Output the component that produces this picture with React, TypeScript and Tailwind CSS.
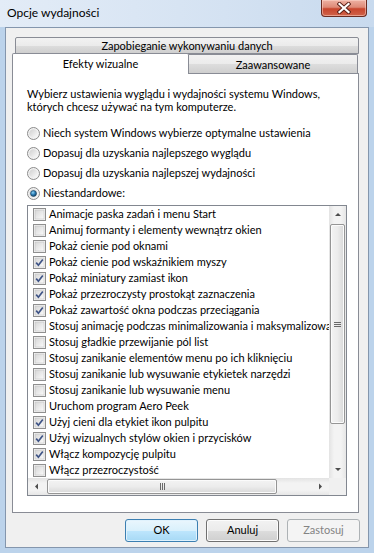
import React from "react";

const rows: [string, boolean][] = [
  ["Animacje paska zadań i menu Start", false],
  ["Animuj formanty i elementy wewnątrz okien", false],
  ["Pokaż cienie pod oknami", false],
  ["Pokaż cienie pod wskaźnikiem myszy", true],
  ["Pokaż miniatury zamiast ikon", true],
  ["Pokaż przezroczysty prostokąt zaznaczenia", true],
  ["Pokaż zawartość okna podczas przeciągania", true],
  ["Stosuj animację podczas minimalizowania i maksymalizowania okien", false],
  ["Stosuj gładkie przewijanie pól list", false],
  ["Stosuj zanikanie elementów menu po ich kliknięciu", false],
  ["Stosuj zanikanie lub wysuwanie etykietek narzędzi", false],
  ["Stosuj zanikanie lub wysuwanie menu", false],
  ["Uruchom program Aero Peek", false],
  ["Użyj cieni dla etykiet ikon pulpitu", true],
  ["Użyj wizualnych stylów okien i przycisków", true],
  ["Włącz kompozycję pulpitu", true],
  ["Włącz przezroczystość", false],
];

function Checkbox({ checked }: { checked: boolean }) {
  return (
    <svg width="13" height="13" viewBox="0 0 13 13" className="shrink-0">
      <defs>
        <linearGradient id="cbg" x1="0" y1="0" x2="1" y2="1">
          <stop offset="0" stopColor="#d6d6d6" />
          <stop offset="1" stopColor="#fbfbfb" />
        </linearGradient>
      </defs>
      <rect x="0.5" y="0.5" width="12" height="12" fill="#f4f4f4" stroke="#8f8f8f" />
      <rect x="2" y="2" width="9" height="9" fill="url(#cbg)" stroke="#bdbdbd" strokeWidth="0.5" />
      {checked && (
        <path d="M3.2 6.6 L5.4 9.2 L9.8 3.4" fill="none" stroke="#3f5486" strokeWidth="1.7" strokeLinejoin="miter" />
      )}
    </svg>
  );
}

function Radio({ checked }: { checked: boolean }) {
  return (
    <svg width="13" height="13" viewBox="0 0 13 13" className="shrink-0">
      <defs>
        <linearGradient id="rbg" x1="0" y1="0" x2="1" y2="1">
          <stop offset="0" stopColor="#cfcfcf" />
          <stop offset="1" stopColor="#fcfcfc" />
        </linearGradient>
        <radialGradient id="rdot" cx="0.4" cy="0.35" r="0.7">
          <stop offset="0" stopColor="#8fd3f5" />
          <stop offset="0.5" stopColor="#2b7db5" />
          <stop offset="1" stopColor="#0c3a5e" />
        </radialGradient>
      </defs>
      <circle cx="6.5" cy="6.5" r="6" fill="#f2f2f2" stroke="#8b8b8b" />
      <circle cx="6.5" cy="6.5" r="4.3" fill="url(#rbg)" />
      {checked && <circle cx="6.5" cy="6.5" r="3" fill="url(#rdot)" stroke="#1b3f5c" strokeWidth="0.6" />}
    </svg>
  );
}

function Arrow({ dir }: { dir: "up" | "down" | "left" | "right" }) {
  const p =
    dir === "up"
      ? "M1 4 L4 1 L7 4 Z"
      : dir === "down"
      ? "M1 1 L4 4 L7 1 Z"
      : dir === "left"
      ? "M4 0.5 L1 3.5 L4 6.5 Z"
      : "M1 0.5 L4 3.5 L1 6.5 Z";
  const w = dir === "up" || dir === "down" ? 8 : 5;
  const h = dir === "up" || dir === "down" ? 5 : 7;
  return (
    <svg width={w} height={h} viewBox={`0 0 ${w} ${h}`}>
      <path d={p} fill="#4d4d4d" />
    </svg>
  );
}

function Btn({ label, def, disabled }: { label: string; def?: boolean; disabled?: boolean }) {
  if (disabled) {
    return (
      <div className="w-[73px] h-[23px] rounded-[3px] border border-[#adb2b5] bg-[#f4f4f4] flex items-center justify-center text-[#838383]">
        {label}
      </div>
    );
  }
  return (
    <div
      className={
        "w-[73px] h-[23px] rounded-[3px] border flex items-center justify-center text-black " +
        (def
          ? "border-[#3c7fb1] bg-[linear-gradient(#eaf6fd_0%,#d9f0fc_50%,#bee6fd_51%,#a7d9f5_100%)] shadow-[inset_0_0_0_1px_#e0f2fd]"
          : "border-[#707070] bg-[linear-gradient(#f2f2f2_0%,#ebebeb_50%,#dddddd_51%,#cfcfcf_100%)] shadow-[inset_0_0_0_1px_#fcfcfc]")
      }
    >
      {label}
    </div>
  );
}

export default function App() {
  return (
    <div
      className="w-[374px] h-[553px] bg-[#bcd3eb] flex flex-col overflow-hidden text-[11px] text-black"
      style={{ fontFamily: 'Lato, "Noto Sans", sans-serif' }}
    >
      {/* title bar */}
      <div className="h-[27px] flex justify-between bg-[linear-gradient(90deg,#e3ecf7_0%,#d4e2f2_60%,#c8daee_100%)]">
        <div className="pl-[7px] pt-[5px] leading-[16px] text-[12px]">Opcje wydajności</div>
        <div className="mr-[7px] w-[46px] h-[17px] rounded-b-[4px] border border-t-0 border-[#6a2c22] bg-[linear-gradient(#eeb1a3_0%,#de8a77_45%,#c8452d_55%,#d0644a_100%)] flex items-center justify-center shadow-[inset_0_0_0_1px_rgba(255,220,210,0.5)]">
          <svg width="14" height="12" viewBox="0 0 14 12">
            <path d="M2.5 2 L11.5 10 M11.5 2 L2.5 10" stroke="#5a2018" strokeWidth="4" strokeLinecap="square" />
            <path d="M2.5 2 L11.5 10 M11.5 2 L2.5 10" stroke="#ffffff" strokeWidth="2.2" strokeLinecap="square" />
          </svg>
        </div>
      </div>

      {/* client area */}
      <div className="mx-[5px] h-[521px] border border-[#8496ad] bg-[#f0f0f0] flex flex-col">
        <div className="pl-[6px] pr-[9px] pt-[9px] flex flex-col">
          {/* top tab row */}
          <div className="ml-[3px] h-[17px] border border-[#898c95] rounded-t-[2px] bg-[linear-gradient(#f2f2f2_0%,#ebebeb_50%,#dddddd_51%,#cfcfcf_100%)] flex justify-center leading-[16px]">
            Zapobieganie wykonywaniu danych
          </div>
          {/* second tab row */}
          <div className="-mt-[2px] flex items-end relative z-10 h-[21px]">
            <div className="w-[177px] h-[21px] -mb-[1px] border border-b-0 border-[#898c95] rounded-t-[2px] bg-white flex justify-center leading-[19px]">
              Efekty wizualne
            </div>
            <div className="w-[169px] h-[19px] border border-l-0 border-b-0 border-[#898c95] rounded-tr-[2px] bg-[linear-gradient(#f2f2f2_0%,#ebebeb_50%,#dddddd_51%,#cfcfcf_100%)] flex justify-center leading-[19px]">
              Zaawansowane
            </div>
          </div>
          {/* panel */}
          <div className="w-[347px] h-[440px] border border-[#898c95] bg-white pl-[14px] pt-[13px] flex flex-col">
            <div className="leading-[13px]">
              Wybierz ustawienia wyglądu i wydajności systemu Windows,
              <br />
              których chcesz używać na tym komputerze.
            </div>
            <div className="mt-[10px] flex flex-col">
              {[
                "Niech system Windows wybierze optymalne ustawienia",
                "Dopasuj dla uzyskania najlepszego wyglądu",
                "Dopasuj dla uzyskania najlepszej wydajności",
                "Niestandardowe:",
              ].map((t, i) => (
                <div key={t} className="h-[20px] flex items-center gap-[3px]">
                  <Radio checked={i === 3} />
                  <span>{t}</span>
                </div>
              ))}
            </div>
            {/* list box */}
            <div className="mt-[2px] w-[320px] h-[291px] border border-[#828790] bg-white flex flex-col">
              <div className="flex h-[272px]">
                <div className="w-[301px] overflow-hidden flex flex-col">
                  {rows.map(([t, c]) => (
                    <div key={t} className="h-[16px] shrink-0 flex items-center gap-[3px] pl-[5px] whitespace-nowrap">
                      <Checkbox checked={c} />
                      <span>{t}</span>
                    </div>
                  ))}
                </div>
                {/* vertical scrollbar */}
                <div className="w-[17px] flex flex-col bg-[linear-gradient(90deg,#e3e3e3_0%,#f3f3f3_30%,#f3f3f3_70%,#e6e6e6_100%)]">
                  <div className="h-[17px] flex items-center justify-center">
                    <Arrow dir="up" />
                  </div>
                  <div className="mt-[1px] h-[200px] mx-[1px] rounded-[2px] border border-[#959595] bg-[linear-gradient(90deg,#f3f3f3_0%,#ececec_50%,#d8d8d8_100%)] shadow-[inset_0_0_0_1px_#fbfbfb] flex items-center justify-center">
                    <svg width="7" height="7" viewBox="0 0 7 7">
                      <path d="M0 1.5 H7 M0 3.5 H7 M0 5.5 H7" stroke="#6a6a6a" strokeWidth="1" />
                    </svg>
                  </div>
                  <div className="flex-1" />
                  <div className="h-[17px] flex items-center justify-center">
                    <Arrow dir="down" />
                  </div>
                </div>
              </div>
              {/* horizontal scrollbar */}
              <div className="flex h-[17px]">
                <div className="w-[301px] flex items-center bg-[linear-gradient(#e3e3e3_0%,#f3f3f3_30%,#f3f3f3_70%,#e6e6e6_100%)]">
                  <div className="w-[17px] h-[17px] flex items-center justify-center">
                    <Arrow dir="left" />
                  </div>
                  <div className="ml-[2px] w-[230px] h-[15px] rounded-[2px] border border-[#959595] bg-[linear-gradient(#f3f3f3_0%,#ececec_50%,#d8d8d8_100%)] shadow-[inset_0_0_0_1px_#fbfbfb] flex items-center justify-center">
                    <svg width="7" height="7" viewBox="0 0 7 7">
                      <path d="M1.5 0 V7 M3.5 0 V7 M5.5 0 V7" stroke="#6a6a6a" strokeWidth="1" />
                    </svg>
                  </div>
                  <div className="flex-1" />
                  <div className="w-[17px] h-[17px] flex items-center justify-center">
                    <Arrow dir="right" />
                  </div>
                </div>
                <div className="w-[17px] bg-[#f0f0f0]" />
              </div>
            </div>
          </div>
        </div>
        {/* buttons */}
        <div className="mt-[6px] pr-[8px] flex justify-end gap-[8px]">
          <Btn label="OK" def />
          <Btn label="Anuluj" />
          <Btn label="Zastosuj" disabled />
        </div>
      </div>
    </div>
  );
}
